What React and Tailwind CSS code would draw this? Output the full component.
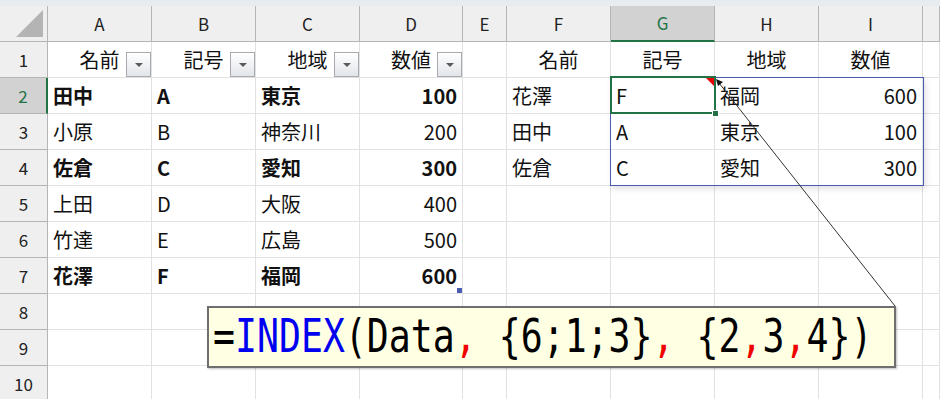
import React from "react";

const COLS = ["A", "B", "C", "D", "E", "F", "G", "H", "I", ""];
const GRID_COLS = "grid-cols-[48px_104px_104px_104px_103px_44px_104px_104px_104px_104px_1fr]";

// each row: 10 cells for A..J, value or {v, bold, align}
const rows = [
  [
    { v: "名前", align: "center", filter: true },
    { v: "記号", align: "center", filter: true },
    { v: "地域", align: "center", filter: true },
    { v: "数値", align: "center", filter: true },
    null,
    { v: "名前", align: "center" },
    { v: "記号", align: "center" },
    { v: "地域", align: "center" },
    { v: "数値", align: "center" },
    null,
  ],
  [
    { v: "田中", bold: true },
    { v: "A", bold: true },
    { v: "東京", bold: true },
    { v: "100", bold: true, align: "right" },
    null,
    { v: "花澤" },
    { v: "F" },
    { v: "福岡" },
    { v: "600", align: "right" },
    null,
  ],
  [
    { v: "小原" },
    { v: "B" },
    { v: "神奈川" },
    { v: "200", align: "right" },
    null,
    { v: "田中" },
    { v: "A" },
    { v: "東京" },
    { v: "100", align: "right" },
    null,
  ],
  [
    { v: "佐倉", bold: true },
    { v: "C", bold: true },
    { v: "愛知", bold: true },
    { v: "300", bold: true, align: "right" },
    null,
    { v: "佐倉" },
    { v: "C" },
    { v: "愛知" },
    { v: "300", align: "right" },
    null,
  ],
  [{ v: "上田" }, { v: "D" }, { v: "大阪" }, { v: "400", align: "right" }, null, null, null, null, null, null],
  [{ v: "竹達" }, { v: "E" }, { v: "広島" }, { v: "500", align: "right" }, null, null, null, null, null, null],
  [
    { v: "花澤", bold: true },
    { v: "F", bold: true },
    { v: "福岡", bold: true },
    { v: "600", bold: true, align: "right", handle: true },
    null,
    null,
    null,
    null,
    null,
    null,
  ],
  [null, null, null, null, null, null, null, null, null, null],
  [null, null, null, null, null, null, null, null, null, null],
  [null, null, null, null, null, null, null, null, null, null],
];

const FilterButton = () => (
  <span className="absolute right-0 bottom-0 w-[25px] h-[25px] border border-[#a7abb0] bg-linear-to-b from-white to-[#e2e5e9] flex items-center justify-center">
    <span className="w-0 h-0 border-l-[4px] border-r-[4px] border-t-[4px] border-l-transparent border-r-transparent border-t-[#5a5a5a]" />
  </span>
);

const Cell = ({ cell }) => {
  if (!cell) return <div className="border-r border-b border-[#e1e1e1]" />;
  const align =
    cell.align === "right"
      ? "justify-end"
      : cell.align === "center"
      ? "justify-center"
      : "justify-start";
  return (
    <div
      className={`relative border-r border-b border-[#e1e1e1] flex items-center px-[5px] text-[20px] leading-none text-[#111] ${align} ${
        cell.bold ? "font-bold" : "font-normal"
      }`}
    >
      <span className="whitespace-nowrap">{cell.v}</span>
      {cell.filter && <FilterButton />}
      {cell.handle && (
        <span className="absolute right-0 bottom-0 w-[5px] h-[5px] bg-[#4a5cb0]" />
      )}
    </div>
  );
};

export default function App() {
  return (
    <div className="relative w-[940px] h-[399px] overflow-hidden bg-white font-['Noto_Sans_CJK_JP',sans-serif]">
      <div className="h-[6px] bg-[#e9ecef]" />

      <div className={`grid ${GRID_COLS} grid-rows-[36px] auto-rows-[36px]`}>
        {/* corner */}
        <div className="relative bg-[#efefef] border-r border-b border-[#b5b5b5]">
          <svg className="absolute left-[16px] top-[4px]" width="28" height="28" viewBox="0 0 28 28">
            <polygon points="27,0 27,27 0,27" fill="#b4b4b4" />
          </svg>
        </div>
        {COLS.map((c, i) =>
          c === "G" ? (
            <div
              key={i}
              className="bg-[#d2d2d2] border-r border-[#b5b5b5] border-b-2 border-b-[#217346] flex items-center justify-center text-[17px] text-[#217346]"
            >
              {c}
            </div>
          ) : (
            <div
              key={i}
              className="bg-[#efefef] border-r border-b border-[#b5b5b5] flex items-center justify-center text-[17px] text-[#222]"
            >
              {c}
            </div>
          )
        )}

        {rows.map((r, ri) => (
          <React.Fragment key={ri}>
            {ri === 1 ? (
              <div className="bg-[#d2d2d2] border-r-2 border-r-[#217346] border-b border-b-[#b5b5b5] flex items-center justify-center text-[17px] text-[#217346]">
                {ri + 1}
              </div>
            ) : (
              <div className="bg-[#efefef] border-r border-b border-[#b5b5b5] flex items-center justify-center text-[17px] text-[#222]">
                {ri + 1}
              </div>
            )}
            {r.map((cell, ci) => (
              <Cell key={ci} cell={cell} />
            ))}
          </React.Fragment>
        ))}
      </div>

      {/* spill range G2:I4 */}
      <div className="absolute left-[610px] top-[77px] w-[314px] h-[109px] border border-[#4a5cb0] shadow-[2px_3px_6px_rgba(0,0,0,0.12)] pointer-events-none" />

      {/* active cell G2 */}
      <div className="absolute left-[610px] top-[76px] w-[106px] h-[38px] border-2 border-[#217346] pointer-events-none">
        <svg className="absolute right-0 top-0" width="8" height="8" viewBox="0 0 8 8">
          <polygon points="0,0 8,0 8,8" fill="#e60000" />
        </svg>
        <span className="absolute right-[-5px] bottom-[-5px] w-[7px] h-[7px] bg-[#217346] border border-white" />
      </div>

      {/* callout arrow */}
      <svg className="absolute left-0 top-0 pointer-events-none" width="940" height="399">
        <line x1="895" y1="306" x2="719" y2="83" stroke="#333" strokeWidth="1" />
        <polygon points="716,79 723,82 718,86" fill="#111" />
      </svg>

      {/* formula callout */}
      <div className="absolute left-[207px] top-[306px] w-[689px] h-[62px] bg-[#ffffe3] border-2 border-[#6f6f6f] shadow-[1px_1px_2px_rgba(0,0,0,0.25)] flex items-center pl-[4px] overflow-hidden">
        <span className="inline-block scale-y-[1.28] origin-center whitespace-pre font-['DejaVu_Sans_Mono',monospace] text-[36.5px] leading-none text-black">
          =<span className="text-[#0000f0]">INDEX</span>(Data<span className="text-[#f00000]">,</span> {"{"}6;1;3{"}"}<span className="text-[#f00000]">,</span> {"{"}2<span className="text-[#f00000]">,</span>3<span className="text-[#f00000]">,</span>4{"}"})
        </span>
      </div>
    </div>
  );
}
